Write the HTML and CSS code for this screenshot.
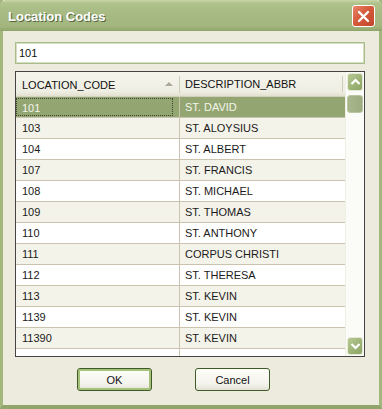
FILE: index.html
```
<!doctype html>
<html>
<head>
	<title>Location Codes</title>
	<meta charset="utf-8" />
	<link rel="stylesheet" href="styles.css">
</head>
	<body>
		<div class="window">
			<div class="titlebar">
				<span class="title">Location Codes</span>
				<span class="close">
					<svg width="13" height="13" viewBox="0 0 13 13"><path d="M2 2 L11 11 M11 2 L2 11" stroke="#fff" stroke-width="2.4" stroke-linecap="round"/></svg>
				</span>
			</div>
			<div class="content">
				<div class="search">101</div>
				<div class="grid">
					<div class="table">
						<div class="header">
							<div class="hcell first">LOCATION_CODE <span class="sort"></span></div>
							<div class="hcell">DESCRIPTION_ABBR</div>
						</div>
						<div class="rows">
							<div class="row selected"><div class="cell first"><span class="focus">101</span></div><div class="cell">ST. DAVID</div></div>
							<div class="row alt"><div class="cell first">103</div><div class="cell">ST. ALOYSIUS</div></div>
							<div class="row"><div class="cell first">104</div><div class="cell">ST. ALBERT</div></div>
							<div class="row alt"><div class="cell first">107</div><div class="cell">ST. FRANCIS</div></div>
							<div class="row"><div class="cell first">108</div><div class="cell">ST. MICHAEL</div></div>
							<div class="row alt"><div class="cell first">109</div><div class="cell">ST. THOMAS</div></div>
							<div class="row"><div class="cell first">110</div><div class="cell">ST. ANTHONY</div></div>
							<div class="row alt"><div class="cell first">111</div><div class="cell">CORPUS CHRISTI</div></div>
							<div class="row"><div class="cell first">112</div><div class="cell">ST. THERESA</div></div>
							<div class="row alt"><div class="cell first">113</div><div class="cell">ST. KEVIN</div></div>
							<div class="row"><div class="cell first">1139</div><div class="cell">ST. KEVIN</div></div>
							<div class="row alt"><div class="cell first">11390</div><div class="cell">ST. KEVIN</div></div>
							<div class="row"><div class="cell first"></div><div class="cell"></div></div>
						</div>
					</div>
					<div class="scrollbar">
						<div class="sbtn">
							<svg width="11" height="8" viewBox="0 0 11 8"><path d="M1.5 6 L5.5 2 L9.5 6" fill="none" stroke="#fff" stroke-width="2.2"/></svg>
						</div>
						<div class="thumb"></div>
						<div class="track"></div>
						<div class="sbtn">
							<svg width="11" height="8" viewBox="0 0 11 8"><path d="M1.5 2 L5.5 6 L9.5 2" fill="none" stroke="#fff" stroke-width="2.2"/></svg>
						</div>
					</div>
				</div>
				<div class="controls">
					<button class="btn default">OK</button>
					<button class="btn">Cancel</button>
				</div>
			</div>
		</div>
	</body>
</html>
```

FILE: styles.css
```
html {
	background-color: #edebdd;
	font-family: "Liberation Sans", Arial, sans-serif;
	font-size: 11px;
}

body {
	margin: 0px;
}

.window {
	width: 382px;
	height: 409px;
	box-sizing: border-box;
	display: flex;
	flex-direction: column;
	background-color: #edebdd;
	border-left: 3px solid #a3b67e;
	border-right: 3px solid #a3b67e;
	border-bottom: 4px solid #8fa56a;
}

.titlebar {
	height: 31px;
	margin: 0 -3px;
	padding: 0 7px 0 8px;
	display: flex;
	align-items: center;
	justify-content: space-between;
	background: linear-gradient(#c9d6a8 0px, #b1c38d 3px, #a8bb84 12px, #a3b67e 26px, #93a96e 30px, #8aa065 31px);
	border-radius: 6px 6px 0 0;
}

.title {
	color: #fff;
	font-weight: bold;
	font-size: 13px;
	text-shadow: 1px 1px 0 #56653f;
	padding-top: 2px;
}

.close {
	width: 21px;
	height: 20px;
	margin-top: 1px;
	display: flex;
	align-items: center;
	justify-content: center;
	border: 1px solid #fff;
	border-radius: 3px;
	background: linear-gradient(135deg, #e9856a, #d55b3b 45%, #c2452a);
}

.content {
	flex: 1;
	padding: 11px 14px 0 12px;
	display: flex;
	flex-direction: column;
}

.search {
	height: 22px;
	box-sizing: border-box;
	border: 1px solid #a9bd8a;
	box-shadow: inset 0 0 0 1px #d3dec2;
	background-color: #fff;
	padding: 4px 3px;
	color: #111;
}

.grid {
	margin-top: 7px;
	height: 286px;
	box-sizing: border-box;
	border: 1px solid #444;
	display: flex;
	background-color: #fff;
}

.table {
	flex: 1;
	display: flex;
	flex-direction: column;
	overflow: hidden;
}

.header {
	height: 25px;
	flex-shrink: 0;
	display: flex;
	background: linear-gradient(#f6f5ec, #efeee3 80%, #e3e0d0);
	border-bottom: 1px solid #d3cfbd;
	box-sizing: border-box;
}

.hcell {
	flex: 1;
	display: flex;
	align-items: center;
	padding-left: 5px;
	color: #111;
	position: relative;
}

.hcell.first {
	width: 164px;
	flex: none;
	box-sizing: border-box;
	padding-left: 6px;
	border-right: 1px solid #d0ccba;
	margin: 4px 0;
	height: 17px;
	align-self: center;
	padding-top: 1px;
}

.hcell:last-child {
	margin: 4px 2px 4px 0;
	border-right: 1px solid #d0ccba;
}

.sort {
	position: absolute;
	right: 6px;
	top: 6px;
	width: 0;
	height: 0;
	border-left: 4px solid transparent;
	border-right: 4px solid transparent;
	border-bottom: 4px solid #aca899;
}

.rows {
	flex: 1;
	overflow: hidden;
}

.row {
	height: 21px;
	box-sizing: border-box;
	display: flex;
	border-bottom: 1px solid #c9c3b0;
	background-color: #fff;
	color: #1a1a1a;
}

.row.alt {
	background-color: #f4f3ea;
}

.row.selected {
	background-color: #93a672;
	color: #f4f4ea;
}

.cell {
	flex: 1;
	display: flex;
	align-items: center;
	padding-left: 5px;
	white-space: nowrap;
}

.cell.first {
	width: 164px;
	flex: none;
	box-sizing: border-box;
	padding-left: 6px;
	border-right: 1px solid #c9c3b0;
}

.focus {
	display: block;
	margin: 1px 2px 1px -6px;
	padding-left: 5px;
	width: 100%;
	height: 18px;
	line-height: 18px;
	border: 1px dotted #3b4630;
	box-sizing: border-box;
}

.scrollbar {
	width: 19px;
	flex-shrink: 0;
	display: flex;
	flex-direction: column;
	padding: 1px 1px;
	box-sizing: border-box;
	background-color: #fbfbf7;
	border-left: 1px solid #f0efe6;
}

.sbtn {
	height: 18px;
	display: flex;
	align-items: center;
	justify-content: center;
	border: 1px solid #e4ebd6;
	border-radius: 3px;
	background: linear-gradient(135deg, #b7c995, #9bb274 60%, #8ca466);
	box-sizing: border-box;
}

.thumb {
	height: 16px;
	margin-top: 4px;
	border: 1px solid #b9c6a2;
	border-radius: 3px;
	background: linear-gradient(90deg, #a8b68c, #9dad80);
}

.track {
	flex: 1;
}

.controls {
	display: flex;
	gap: 43px;
	padding-left: 62px;
	margin-top: 11px;
}

.btn {
	width: 75px;
	height: 23px;
	font-family: "Liberation Sans", Arial, sans-serif;
	font-size: 11px;
	color: #111;
	border: 1px solid #3e5a26;
	border-radius: 3px;
	background: linear-gradient(#fefefa, #f4f3ec 70%, #e4e2d6);
	padding: 0;
}

.btn.default {
	box-shadow: inset 0 0 0 2px #a6c27a;
}
```
